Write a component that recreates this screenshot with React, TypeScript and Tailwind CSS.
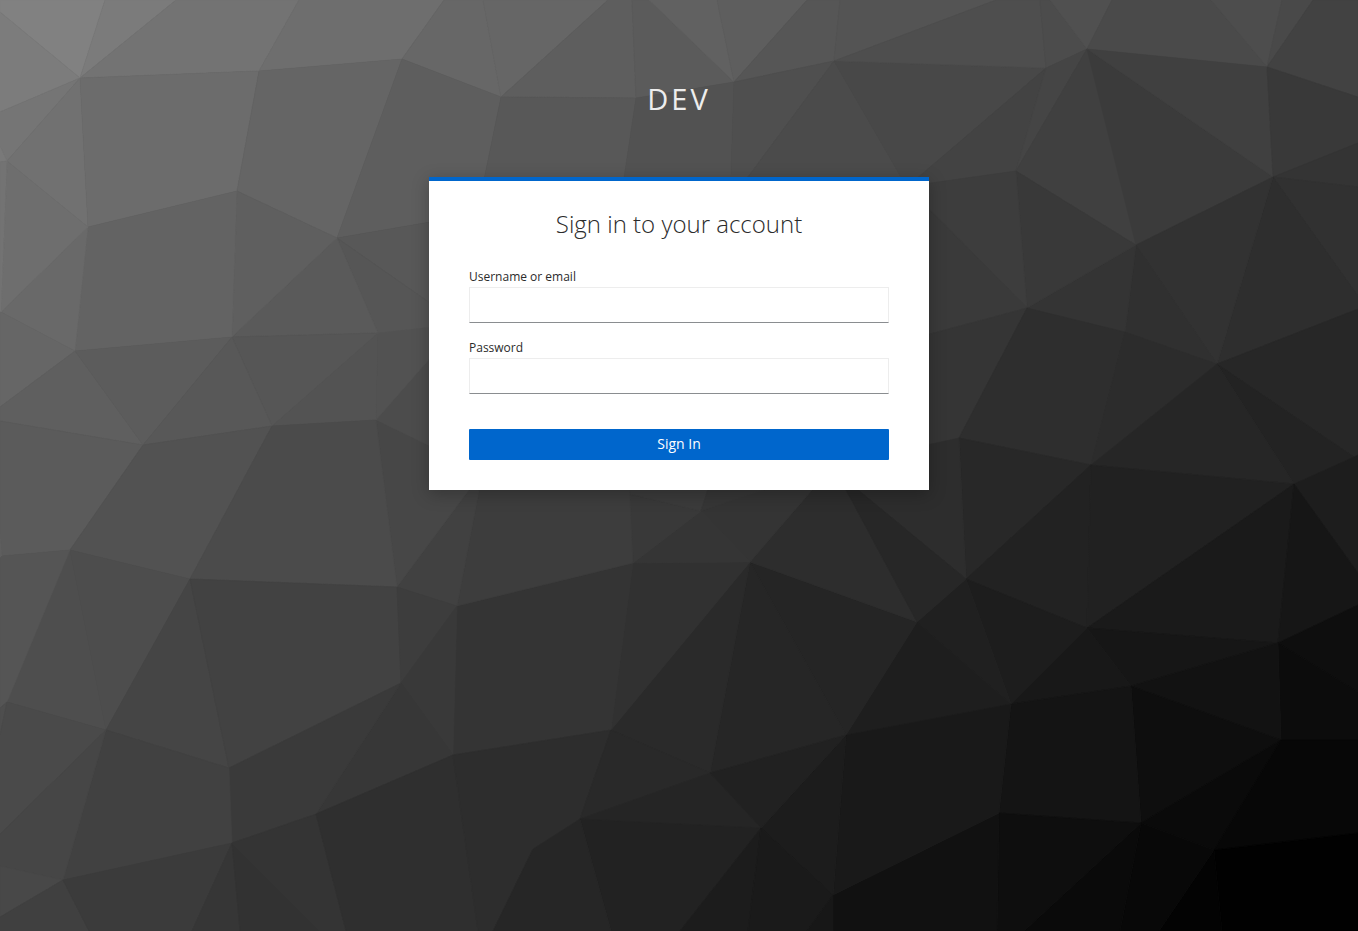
import React from "react";

type Facet = [grey: number, points: string];

const facets: Facet[] = [
  [129, "0,0 105,0 80,78 0,12"],
  [123, "105,0 176,0 80,78"],
  [115, "176,0 299,0 259,71 80,78"],
  [110, "299,0 444,0 402,59 259,71"],
  [124, "0,12 80,78 0,112"],
  [117, "0,112 80,78 7,161 0,146"],
  [121, "0,146 7,161 0,162"],
  [113, "80,78 88,227 7,161"],
  [108, "80,78 259,71 237,191 88,227"],
  [101, "259,71 402,59 337,238 237,191"],
  [103, "444,0 483,0 501,97 402,59"],
  [102, "483,0 608,0 501,97"],
  [94, "402,59 501,97 477,214 337,238"],
  [94, "608,0 632,0 636,98 501,97"],
  [91, "632,0 649,0 734,82 636,98"],
  [97, "649,0 717,0 734,82"],
  [94, "717,0 807,0 734,82"],
  [86, "807,0 840,0 834,61 734,82"],
  [84, "840,0 996,0 834,61"],
  [88, "501,97 636,98 620,205 477,214"],
  [82, "636,98 734,82 730,205 620,205"],
  [79, "734,82 834,61 748,177 730,205"],
  [75, "834,61 901,177 748,177"],
  [72, "834,61 1046,68 919,177 901,177"],
  [78, "996,0 1040,0 1046,68 834,61"],
  [76, "1040,0 1050,0 1087,49 1046,68"],
  [80, "1050,0 1112,0 1087,49"],
  [74, "1112,0 1211,0 1267,67 1087,49"],
  [77, "1211,0 1282,0 1267,67"],
  [73, "1282,0 1313,0 1267,67"],
  [66, "1313,0 1358,0 1358,97 1267,67"],
  [67, "1046,68 1016,171 915,185 915,180"],
  [69, "1046,68 1087,49 1016,171"],
  [64, "1087,49 1136,245 1016,171"],
  [59, "1087,49 1273,177 1136,245"],
  [64, "1087,49 1267,67 1273,177"],
  [57, "1267,67 1358,97 1358,143 1273,177"],
  [52, "1273,177 1358,143 1358,187"],
  [49, "1273,177 1358,187 1358,296"],
  [46, "1273,177 1358,296 1358,309 1217,364"],
  [50, "1136,245 1273,177 1217,364"],
  [48, "1136,245 1217,364 1125,332"],
  [52, "1136,245 1125,332 1027,308"],
  [57, "1016,171 1136,245 1027,308"],
  [61, "1016,171 1027,308 910,189 910,186"],
  [58, "915,195 1027,308 915,338"],
  [53, "1027,308 959,438 915,448 915,338"],
  [46, "1027,308 1125,332 1091,465 959,438"],
  [44, "1125,332 1217,364 1091,465"],
  [39, "1217,364 1358,309 1358,455 1354,457"],
  [35, "1217,364 1354,457 1294,484"],
  [38, "1217,364 1294,484 1091,465"],
  [29, "1294,484 1354,457 1358,455 1358,573"],
  [40, "959,438 1091,465 966,579"],
  [45, "959,438 966,579 858,490 858,460"],
  [34, "1091,465 1087,628 966,579"],
  [33, "1091,465 1294,484 1087,628"],
  [26, "1294,484 1278,643 1087,628"],
  [22, "1294,484 1358,573 1358,605 1278,643"],
  [14, "1278,643 1358,605 1358,692"],
  [12, "1278,643 1358,692 1358,740 1281,740"],
  [22, "1087,628 1278,643 1131,686"],
  [24, "1087,628 1131,686 1011,704"],
  [18, "1278,643 1281,740 1131,686"],
  [14, "1131,686 1281,740 1141,823"],
  [20, "1011,704 1131,686 1141,823 999,813"],
  [10, "1281,740 1141,823 1214,850"],
  [7, "1281,740 1358,740 1358,833 1214,850"],
  [1, "1214,850 1358,833 1358,931 1222,931"],
  [3, "1214,850 1222,931 1159,931"],
  [8, "1141,823 1214,850 1159,931 1120,931"],
  [10, "1141,823 1120,931 1024,931"],
  [14, "999,813 1141,823 1024,931 997,931"],
  [17, "999,813 997,931 833,931 833,895"],
  [29, "966,579 1087,628 1011,704"],
  [32, "966,579 1011,704 917,622"],
  [30, "917,622 1011,704 846,735"],
  [25, "846,735 1011,704 999,813 833,895"],
  [28, "846,735 833,895 761,828"],
  [37, "750,562 917,622 846,735"],
  [38, "750,562 846,735 710,773"],
  [42, "750,562 710,773 611,730"],
  [49, "633,563 750,562 611,730"],
  [52, "633,563 457,606 453,755 611,730"],
  [45, "825,475 838,475 917,622 750,562"],
  [39, "838,475 840,475 966,579 917,622"],
  [52, "825,475 800,478 701,511 750,562"],
  [53, "701,511 750,562 633,563"],
  [57, "628,480 630,494 701,511 633,563"],
  [59, "610,480 711,480 701,511 630,494"],
  [54, "711,480 800,478 701,511"],
  [61, "482,475 629,475 633,563 457,606"],
  [65, "480,475 482,475 457,606 397,587"],
  [71, "376,420 440,451 480,475 397,587"],
  [76, "376,420 440,347 440,451"],
  [82, "378,333 440,326 440,347 376,420"],
  [83, "378,333 376,420 272,426"],
  [88, "337,238 477,214 440,310"],
  [86, "337,238 440,310 440,326 378,333"],
  [90, "337,238 378,333 232,337"],
  [95, "237,191 337,238 232,337"],
  [99, "88,227 237,191 232,337 75,351"],
  [105, "88,227 75,351 1,312"],
  [110, "7,161 88,227 1,312"],
  [115, "0,162 7,161 1,312 0,312"],
  [102, "0,312 1,312 75,351 0,407"],
  [95, "75,351 143,445 0,421 0,407"],
  [92, "75,351 232,337 143,445"],
  [86, "232,337 378,333 272,426"],
  [88, "232,337 272,426 143,445"],
  [91, "143,445 0,421 0,534 2,556 70,550"],
  [95, "0,534 2,556 0,558"],
  [82, "143,445 272,426 190,579 70,550"],
  [75, "272,426 376,420 397,587 190,579"],
  [77, "70,550 190,579 106,730"],
  [78, "70,550 106,730 7,702"],
  [85, "0,558 2,556 70,550 7,702 0,708"],
  [78, "0,708 7,702 0,735"],
  [69, "190,579 229,768 106,730"],
  [66, "190,579 397,587 401,683 229,768"],
  [61, "397,587 457,606 401,683"],
  [57, "401,683 457,606 453,755"],
  [55, "401,683 453,755 316,814"],
  [58, "401,683 316,814 232,843 229,768"],
  [65, "106,730 229,768 232,843 63,880"],
  [74, "7,702 106,730 0,834 0,735"],
  [70, "0,834 106,730 63,880 0,866"],
  [72, "0,866 63,880 0,917"],
  [64, "63,880 89,931 0,931 0,917"],
  [59, "63,880 232,843 192,931 89,931"],
  [54, "232,843 192,931 240,931"],
  [50, "232,843 240,931 320,931"],
  [52, "232,843 316,814 346,931 320,931"],
  [47, "316,814 346,931 478,931 453,755"],
  [45, "453,755 478,931 493,931 533,849 580,819 611,730"],
  [41, "611,730 580,819 710,773"],
  [37, "580,819 710,773 761,828"],
  [34, "580,819 761,828 680,931 611,931"],
  [38, "580,819 533,849 493,931 611,931"],
  [28, "761,828 748,931 680,931"],
  [26, "761,828 833,895 807,931 748,931"],
  [23, "833,895 807,931 833,931"],
  [33, "710,773 761,828 846,735"],
];

function Backdrop() {
  return (
    <svg
      aria-hidden="true"
      viewBox="0 0 1358 931"
      preserveAspectRatio="xMidYMid slice"
      className="absolute inset-0 h-full w-full"
    >
      {facets.map(([grey, points]) => {
        const color = `rgb(${grey},${grey},${grey})`;
        return (
          <polygon key={points} points={points} fill={color} stroke={color} strokeWidth="0.6" strokeLinejoin="round" />
        );
      })}
    </svg>
  );
}

interface FieldProps {
  id: string;
  label: string;
  type: string;
  autoComplete: string;
}

function Field({ id, label, type, autoComplete }: FieldProps) {
  return (
    <div className="flex flex-col">
      <label htmlFor={id} className="text-xs leading-5">
        {label}
      </label>
      <input
        id={id}
        name={id}
        type={type}
        autoComplete={autoComplete}
        className="h-9 w-full border border-[#ededed] border-b-[#8a8d90] bg-white px-2 text-base outline-none focus:border-b-[#0066cc]"
      />
    </div>
  );
}

export default function App() {
  return (
    <div className="relative flex min-h-screen flex-col items-center overflow-hidden bg-[#404040] font-['Open_Sans','Noto_Sans',sans-serif] text-[#2b2b2b]">
      <Backdrop />
      <header className="relative pt-[79px] pb-[59px]">
        <div className="text-[29px] leading-[39px] tracking-[3px] text-[#ededed] uppercase">Dev</div>
      </header>
      <main className="relative w-full max-w-[500px] border-t-4 border-[#0066cc] bg-white px-10 pb-[30px] shadow-[0_4px_16px_rgba(0,0,0,0.25)]">
        <h1 className="pt-[27px] text-center text-2xl font-light">Sign in to your account</h1>
        <form className="mt-[27px] flex flex-col" onSubmit={(event) => event.preventDefault()}>
          <div className="flex flex-col gap-[15px]">
            <Field id="username" label="Username or email" type="text" autoComplete="username" />
            <Field id="password" label="Password" type="password" autoComplete="current-password" />
          </div>
          <button
            type="submit"
            className="mt-[35px] h-[31px] cursor-pointer rounded-[1px] bg-[#0066cc] pb-0.5 text-sm text-white hover:bg-[#004080]"
          >
            Sign In
          </button>
        </form>
      </main>
    </div>
  );
}
